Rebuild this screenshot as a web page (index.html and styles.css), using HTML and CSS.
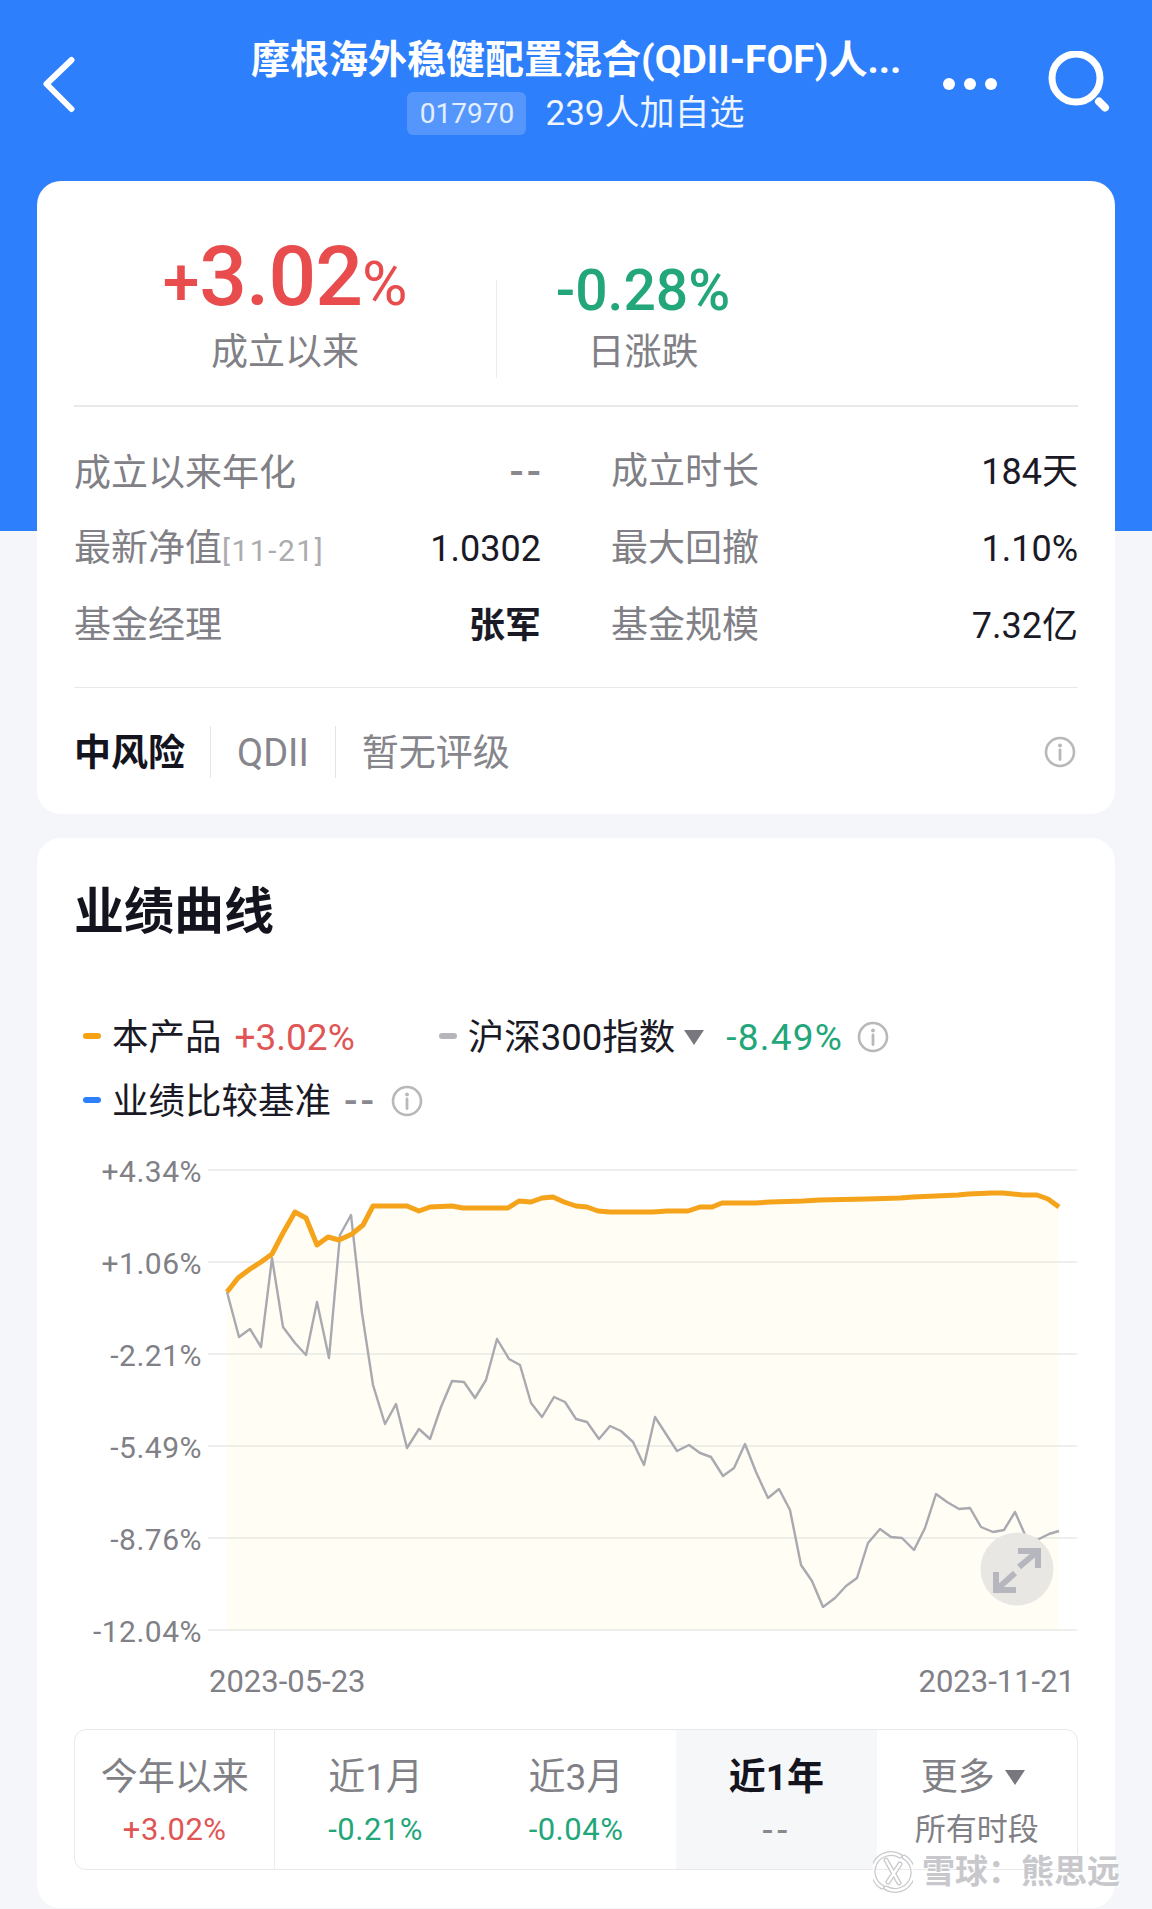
FILE: index.html
```html
<!DOCTYPE html>
<html lang="zh-CN">
<head>
	<meta charset="UTF-8">
	<meta name="viewport" content="width=device-width, initial-scale=1.0">
	<title>摩根海外稳健配置混合</title>
	<link rel="stylesheet" href="styles.css">
</head>
<body>
	<svg class="defs" width="0" height="0" aria-hidden="true">
		<symbol id="info" viewBox="0 0 32 32">
			<circle cx="16" cy="16" r="14" fill="none" stroke="#b8b8bb" stroke-width="2.6"/>
			<circle cx="16" cy="9.4" r="1.9" fill="#b8b8bb"/>
			<path d="M16 14v9.5" fill="none" stroke="#b8b8bb" stroke-width="2.8" stroke-linecap="round"/>
		</symbol>
	</svg>

	<div class="page">
		<header class="topbar">
			<div class="topbar-left">
				<svg class="icon-back" width="32" height="58" viewBox="0 0 32 58">
					<path d="M28.5 4 3.5 28 28.5 53" fill="none" stroke="#fff" stroke-width="6" stroke-linecap="round" stroke-linejoin="round"/>
				</svg>
			</div>
			<div class="topbar-center">
				<div class="fund-name">摩根海外稳健配置混合(QDII-FOF)人...</div>
				<div class="fund-sub">
					<span class="fund-code">017970</span>
					<span class="fund-watch">239人加自选</span>
				</div>
			</div>
			<div class="topbar-right">
				<svg class="icon-more" width="54" height="14" viewBox="0 0 54 14">
					<circle cx="6" cy="7" r="6" fill="#fff"/>
					<circle cx="27" cy="7" r="6" fill="#fff"/>
					<circle cx="48" cy="7" r="6" fill="#fff"/>
				</svg>
				<svg class="icon-search" width="64" height="64" viewBox="0 0 64 64">
					<circle cx="29" cy="27" r="24" fill="none" stroke="#fff" stroke-width="7"/>
					<path d="M52 50.5 58 56.5" fill="none" stroke="#fff" stroke-width="8" stroke-linecap="round"/>
				</svg>
			</div>
		</header>

		<section class="card summary">
			<div class="stats">
				<div class="stat stat-main">
					<div class="stat-value up"><span class="plus">+</span>3.02<span class="percent">%</span></div>
					<div class="stat-label">成立以来</div>
				</div>
				<div class="stat-sep"></div>
				<div class="stat stat-day">
					<div class="stat-value down">-0.28%</div>
					<div class="stat-label">日涨跌</div>
				</div>
			</div>

			<div class="facts">
				<div class="fact"><span class="fact-label">成立以来年化</span><span class="fact-value nodata">--</span></div>
				<div class="fact"><span class="fact-label">成立时长</span><span class="fact-value">184天</span></div>
				<div class="fact"><span class="fact-label">最新净值<span class="fact-date">[11-21]</span></span><span class="fact-value">1.0302</span></div>
				<div class="fact"><span class="fact-label">最大回撤</span><span class="fact-value">1.10%</span></div>
				<div class="fact"><span class="fact-label">基金经理</span><span class="fact-value bold">张军</span></div>
				<div class="fact"><span class="fact-label">基金规模</span><span class="fact-value">7.32亿</span></div>
			</div>

			<div class="tags">
				<span class="tag tag-risk">中风险</span>
				<span class="tag tag-type">QDII</span>
				<span class="tag">暂无评级</span>
				<svg class="tags-info" width="32" height="32"><use href="#info"/></svg>
			</div>
		</section>

		<section class="card perf">
			<h2 class="perf-title">业绩曲线</h2>

			<div class="legend">
				<div class="legend-row">
					<span class="legend-item">
						<i class="dash dash-orange"></i>本产品<span class="legend-value up">+3.02%</span>
					</span>
					<span class="legend-item legend-index">
						<i class="dash dash-grey"></i>沪深300指数<i class="caret"></i><span class="legend-value down legend-value-index">-8.49%</span>
						<svg class="legend-info" width="32" height="32"><use href="#info"/></svg>
					</span>
				</div>
				<div class="legend-row">
					<span class="legend-item">
						<i class="dash dash-blue"></i>业绩比较基准<span class="legend-value muted nodata">--</span>
						<svg class="legend-info" width="32" height="32"><use href="#info"/></svg>
					</span>
				</div>
			</div>

			<svg class="chart" width="1004" height="500" viewBox="74 1150 1004 500">
				<polygon fill="#fffdf4" points="227,1292 238,1278 250,1269 261,1262 272,1254 283,1233 295,1212 306,1218 317,1245 328,1237 339,1240 352,1234 363,1225 373,1206 385,1206 407,1206 419,1211 430,1207 452,1206 463,1208 508,1208 519,1201 531,1202 542,1198 553,1197 564,1202 576,1206 587,1207 598,1211 610,1212 653,1212 667,1211 688,1211 700,1207 712,1207 722,1203 755,1203 770,1202 803,1201 820,1200 867,1199 900,1198 913,1197 958,1195 968,1194 992,1193 1003,1193 1023,1195 1037,1195 1048,1199 1059,1207 1059,1630 227,1630"/>

				<g class="grid">
					<line x1="208" x2="1077" y1="1170" y2="1170"/>
					<line x1="208" x2="1077" y1="1262" y2="1262"/>
					<line x1="208" x2="1077" y1="1354" y2="1354"/>
					<line x1="208" x2="1077" y1="1446" y2="1446"/>
					<line x1="208" x2="1077" y1="1538" y2="1538"/>
					<line x1="208" x2="1077" y1="1630" y2="1630"/>
				</g>

				<g class="axis">
					<text x="202" y="1182">+4.34%</text>
					<text x="202" y="1274">+1.06%</text>
					<text x="202" y="1366">-2.21%</text>
					<text x="202" y="1458">-5.49%</text>
					<text x="202" y="1550">-8.76%</text>
					<text x="202" y="1642">-12.04%</text>
				</g>

				<polyline class="line-index" points="227,1292 239,1337 250,1329 261,1347 272,1258 283,1327 295,1343 306,1355 317,1302 329,1358 340,1235 351,1215 362,1313 373,1385 385,1424 396,1404 407,1448 419,1429 430,1439 441,1407 452,1381 464,1382 475,1398 486,1380 497,1339 509,1359 520,1365 531,1403 542,1417 554,1397 565,1402 576,1419 587,1422 599,1439 610,1426 621,1431 633,1442 644,1465 655,1417 666,1434 677,1451 689,1445 700,1453 711,1457 723,1476 734,1468 745,1444 756,1472 768,1498 779,1489 790,1510 801,1565 812,1581 823,1607 835,1598 846,1586 857,1578 868,1543 880,1529 891,1537 902,1538 914,1550 925,1528 936,1494 947,1502 959,1509 970,1508 981,1527 993,1532 1004,1530 1015,1512 1026,1537 1037,1540 1049,1534 1059,1531"/>
				<polyline class="line-fund" points="227,1292 238,1278 250,1269 261,1262 272,1254 283,1233 295,1212 306,1218 317,1245 328,1237 339,1240 352,1234 363,1225 373,1206 385,1206 407,1206 419,1211 430,1207 452,1206 463,1208 508,1208 519,1201 531,1202 542,1198 553,1197 564,1202 576,1206 587,1207 598,1211 610,1212 653,1212 667,1211 688,1211 700,1207 712,1207 722,1203 755,1203 770,1202 803,1201 820,1200 867,1199 900,1198 913,1197 958,1195 968,1194 992,1193 1003,1193 1023,1195 1037,1195 1048,1199 1059,1207"/>

				<circle cx="1017" cy="1569" r="36.5" fill="#e9e7e4"/>
				<path class="expand" d="M1019 1567 1038 1551M1018 1551H1038V1568M1015 1573 996 1590M996 1572V1590H1016"/>
			</svg>

			<div class="dates">
				<span>2023-05-23</span>
				<span>2023-11-21</span>
			</div>

			<div class="ranges">
				<div class="range range-first">
					<div class="range-name">今年以来</div>
					<div class="range-value up">+3.02%</div>
				</div>
				<div class="range">
					<div class="range-name">近1月</div>
					<div class="range-value down">-0.21%</div>
				</div>
				<div class="range">
					<div class="range-name">近3月</div>
					<div class="range-value down">-0.04%</div>
				</div>
				<div class="range range-active">
					<div class="range-name">近1年</div>
					<div class="range-value muted nodata">--</div>
				</div>
				<div class="range range-more">
					<div class="range-name">更多<i class="caret caret-more"></i></div>
					<div class="range-value range-all">所有时段</div>
				</div>
			</div>
		</section>

		<div class="watermark">
			<svg width="40" height="42" viewBox="0 0 40 42">
				<g fill="none" stroke-linecap="round">
					<path class="mark-halo" d="M27 5A17 17 0 0 0 9 36M13 37A17 17 0 0 0 31 6M13 9 26 32M27 13 15 31"/>
					<path class="mark-line" d="M27 5A17 17 0 0 0 9 36M13 37A17 17 0 0 0 31 6M13 9 26 32M27 13 15 31"/>
				</g>
			</svg>
			<span>雪球：熊思远</span>
		</div>
	</div>
</body>
</html>
```

FILE: styles.css
```css
/* General styles */
* {
	box-sizing: border-box;
}
body {
	margin: 0;
	font-family: Roboto, "Noto Sans CJK SC", sans-serif;
	color: #1a1a26;
	background: #f4f6fa;
}
.defs {
	position: absolute;
}
.page {
	position: relative;
	height: 1909px;
	overflow: hidden;
	background: linear-gradient(#2d7ffc 531px, #f4f6fa 531px);
}
.up {
	color: #e84c4c;
}
.down {
	color: #22a67a;
}
.muted {
	color: #88888d;
}
.nodata {
	font-weight: 500;
	letter-spacing: 3px;
}

/* Top bar */
.topbar {
	display: grid;
	grid-template-columns: 1fr 650px 1fr;
	align-items: center;
	height: 181px;
	padding: 34px 0 46px;
	color: #fff;
}
.topbar-left {
	padding-left: 43px;
}
.icon-back {
	display: block;
}
.topbar-right {
	display: flex;
	align-items: center;
	justify-content: flex-end;
	gap: 50px;
	padding-right: 41px;
}
.icon-more {
	margin-top: -2px;
}
.icon-search {
	margin-top: -3px;
}
.fund-name {
	font-size: 39px;
	font-weight: 700;
	line-height: 52px;
	text-align: center;
	white-space: nowrap;
}
.fund-sub {
	display: flex;
	align-items: center;
	justify-content: center;
	gap: 19px;
	margin-top: 6px;
}
.fund-code {
	width: 119px;
	height: 43px;
	font-size: 28px;
	line-height: 43px;
	text-align: center;
	color: #e3eeff;
	background: #5596fc;
	border-radius: 6px;
}
.fund-watch {
	font-size: 35px;
	line-height: 43px;
	color: #eef5ff;
}

/* Cards */
.card {
	margin: 0 37px;
	padding: 0 37px;
	background: #fff;
	border-radius: 24px;
}

/* Summary card */
.summary {
	height: 633px;
	padding-top: 52px;
}
.stats {
	display: flex;
	align-items: flex-end;
	padding-bottom: 27px;
	border-bottom: 2px solid #e9e9ec;
}
.stat {
	text-align: center;
}
.stat-main {
	width: 422px;
}
.stat-day {
	width: 292px;
}
.stat-sep {
	width: 1px;
	height: 98px;
	background: #ececee;
}
.stat-value {
	height: 60px;
	font-size: 57px;
	font-weight: 500;
	line-height: 56px;
	white-space: nowrap;
}
.stat-main .stat-value {
	height: 90px;
	font-size: 84px;
	letter-spacing: -1px;
	line-height: 87px;
}
.stat-value .plus {
	font-size: 66px;
	letter-spacing: 0;
}
.stat-value .percent {
	font-size: 62px;
	font-weight: 400;
	letter-spacing: 0;
}
.stat-label {
	height: 50px;
	margin-top: 5px;
	font-size: 37px;
	line-height: 50px;
	color: #808086;
}
.facts {
	display: grid;
	grid-template-columns: 1fr 1fr;
	column-gap: 70px;
	padding: 27px 0 22px;
	border-bottom: 1px solid #e9e9ec;
}
.fact {
	display: flex;
	align-items: baseline;
	justify-content: space-between;
	height: 77px;
	font-size: 37px;
	line-height: 76px;
}
.fact-label {
	color: #808086;
}
.fact-date {
	font-size: 30px;
	letter-spacing: 1.5px;
	color: #ababb0;
}
.fact-value {
	font-size: 36px;
	color: #1a1a26;
}
.fact-value.nodata {
	margin-right: -3px;
	font-size: 42px;
	color: #88888d;
}
.bold {
	font-weight: 700;
}
.tags {
	display: flex;
	align-items: center;
	margin-top: 38px;
}
.tag {
	height: 52px;
	padding: 0 26px;
	font-size: 37px;
	line-height: 55px;
	color: #85858b;
	border-right: 1px solid #e4e4e8;
}
.tag-risk {
	padding-left: 0;
	padding-right: 25px;
	font-weight: 700;
	color: #14141e;
}
.tag-type {
	font-size: 38px;
}
.tag:nth-child(3) {
	border-right: 0;
}
.tags-info {
	margin-left: auto;
	margin-right: 2px;
}

/* Performance card */
.perf {
	height: 1070px;
	margin-top: 24px;
	padding-top: 44px;
}
.perf-title {
	margin: 0;
	font-size: 50px;
	font-weight: 700;
	line-height: 60px;
	color: #14141e;
}
.legend {
	display: flex;
	flex-direction: column;
	gap: 14px;
	margin-top: 71px;
}
.legend-row {
	display: flex;
	height: 50px;
}
.legend-item {
	display: flex;
	align-items: center;
	font-size: 36.5px;
	line-height: 50px;
}
.legend-index {
	margin-left: 84px;
}
.dash {
	display: block;
	width: 18px;
	height: 6px;
	margin: -4px 11px 0 9px;
	border-radius: 3px;
}
.legend-index .dash {
	margin-left: 0;
}
.dash-orange {
	background: #f5a313;
}
.dash-grey {
	background: #b5b5bb;
}
.dash-blue {
	background: #2d7ffc;
}
.legend-value {
	margin-left: 13px;
	font-size: 37px;
}
.legend-value.up,
.range-value.up {
	color: #e05555;
}
.legend-value.nodata {
	font-size: 40px;
}
.legend-value-index {
	margin-left: 22px;
	letter-spacing: 1.2px;
}
.legend-info {
	margin: -2px 0 0 14px;
}
.caret {
	display: block;
	width: 0;
	height: 0;
	margin: -2px 0 0 9px;
	border-left: 10px solid transparent;
	border-right: 10px solid transparent;
	border-top: 15px solid #77777d;
}
.chart {
	display: block;
	margin-top: 23px;
}
.grid line {
	stroke: #e9e8e6;
	stroke-width: 1.5;
}
.axis text {
	font-size: 30px;
	letter-spacing: 0.5px;
	text-anchor: end;
	fill: #808086;
}
.line-index {
	fill: none;
	stroke: #a9a9b0;
	stroke-width: 2.4;
	stroke-linejoin: round;
}
.line-fund {
	fill: none;
	stroke: #f4a31a;
	stroke-width: 5;
	stroke-linejoin: round;
}
.expand {
	fill: none;
	stroke: #b6b6be;
	stroke-width: 6;
}
.dates {
	display: flex;
	justify-content: space-between;
	margin-top: 12px;
	padding: 0 3px 0 135px;
	font-size: 31px;
	line-height: 40px;
	color: #808086;
}
.ranges {
	display: grid;
	grid-template-columns: repeat(5, 1fr);
	height: 141px;
	margin-top: 27px;
	overflow: hidden;
	border: 1px solid #e9e9ec;
	border-radius: 12px;
}
.range {
	padding-top: 23px;
	text-align: center;
}
.range-first {
	border-right: 1px solid #ececee;
}
.range-active {
	background: #f6f7f9;
}
.range-name {
	display: flex;
	align-items: center;
	justify-content: center;
	font-size: 37px;
	line-height: 50px;
	color: #808086;
}
.range-active .range-name {
	font-weight: 700;
	color: #14141e;
}
.range-more .range-name {
	padding-right: 8px;
}
.range-value {
	margin-top: 7px;
	font-size: 31px;
	letter-spacing: 0.5px;
	line-height: 40px;
}
.range-value.nodata {
	font-size: 34px;
	letter-spacing: 3px;
}
.range-all {
	letter-spacing: 0;
	color: #808086;
}
.caret-more {
	margin-left: 10px;
}

/* Watermark */
.watermark {
	position: absolute;
	left: 873px;
	top: 1851px;
	display: flex;
	align-items: center;
	gap: 9px;
	font-size: 33px;
	font-weight: 700;
	line-height: 42px;
	white-space: nowrap;
	color: #c8c8cc;
	text-shadow: 1px 1px 1px #fff, -1px -1px 1px #fff;
}
.mark-halo {
	stroke: #c9c9cd;
	stroke-width: 5;
}
.mark-line {
	stroke: #fff;
	stroke-width: 2.5;
}
```
